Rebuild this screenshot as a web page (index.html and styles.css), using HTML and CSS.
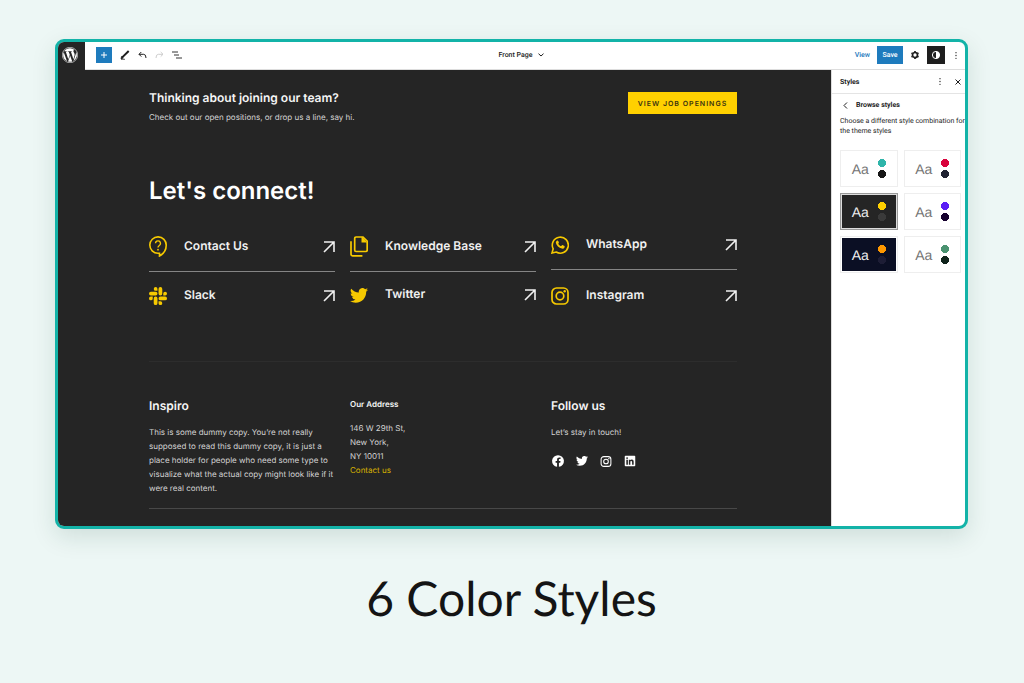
FILE: index.html
```html
<!DOCTYPE html>
<html lang="en">

<head>
  <meta charset="UTF-8">
  <meta name="viewport" content="width=device-width, initial-scale=1.0">
  <title>6 Color Styles</title>
  <link rel="stylesheet" href="styles.css">
</head>

<body>
  <!-- shared icons -->
  <svg class="sprite" aria-hidden="true">
    <symbol id="arrow" viewBox="0 0 12 12">
      <path d="M1 1h10v10M11 1L1 11" fill="none" stroke="currentColor" stroke-width="1.600" />
    </symbol>
    <symbol id="twitter" viewBox="0 0 24 20">
      <path fill="currentColor" d="M24 2.4a9.800 9.800 0 0 1-2.830.770A4.900 4.900 0 0 0 23.340.450a9.900 9.900 0 0 1-3.130 1.190A4.920 4.920 0 0 0 11.820 6.130 14 14 0 0 1 1.670.980a4.930 4.930 0 0 0 1.520 6.570 4.900 4.900 0 0 1-2.230-.610v.060a4.930 4.930 0 0 0 3.950 4.830 5 5 0 0 1-2.220.080 4.930 4.930 0 0 0 4.600 3.420A9.900 9.900 0 0 1 0 17.370a13.940 13.940 0 0 0 7.550 2.210c9.140 0 14.310-7.720 13.980-14.640A10 10 0 0 0 24 2.400z" />
    </symbol>
    <symbol id="instagram" viewBox="0 0 18 18">
      <g fill="none" stroke="currentColor" stroke-width="1.700">
        <rect x="1" y="1" width="16" height="16" rx="4.500" />
        <circle cx="9" cy="9" r="3.800" />
      </g>
      <circle cx="13.700" cy="4.300" r="1.200" fill="currentColor" />
    </symbol>
    <symbol id="dots" viewBox="0 0 10 10">
      <g fill="currentColor">
        <circle cx="5" cy="1.500" r=".800" />
        <circle cx="5" cy="5" r=".800" />
        <circle cx="5" cy="8.500" r=".800" />
      </g>
    </symbol>
  </svg>

  <main class="editor">
    <header class="topbar">
      <a class="wp-logo" href="#" aria-label="WordPress">
        <svg width="16" height="16" viewBox="0 0 122.500 122.500" fill="#fff">
          <path d="M8.700 61.260c0 20.800 12.100 38.780 29.620 47.300L13.260 39.930a52.350 52.350 0 0 0-4.560 21.330zM96.740 58.610c0-6.500-2.330-11-4.340-14.500-2.660-4.330-5.160-8-5.160-12.330 0-4.830 3.660-9.330 8.830-9.330l.680.050A52.350 52.350 0 0 0 61.260 8.710a52.520 52.520 0 0 0-43.890 23.700l3.370.060c5.490 0 13.990-.670 13.990-.670 2.830-.160 3.160 3.990.340 4.330 0 0-2.850.330-6.010.500l19.120 56.880 11.490-34.460-8.180-22.420c-2.830-.170-5.510-.500-5.510-.500-2.830-.160-2.500-4.490.330-4.330 0 0 8.670.670 13.830.670 5.490 0 13.990-.670 13.990-.670 2.830-.160 3.170 3.990.340 4.330 0 0-2.860.330-6.010.500l18.970 56.440 5.240-17.500c2.270-7.260 4-12.480 4-16.960zM62.180 65.860l-15.750 45.770a52.500 52.500 0 0 0 32.270-.840 4.800 4.800 0 0 1-.370-.720zM107.320 36.080c.220 1.670.350 3.460.350 5.390 0 5.320-.990 11.300-3.990 18.770L87.650 106.600a52.540 52.540 0 0 0 19.670-70.520z" />
          <circle cx="61.260" cy="61.260" r="59" fill="none" stroke="#fff" stroke-width="4.500" />
        </svg>
      </a>
      <div class="tools">
        <button class="add" aria-label="Add block">
          <svg width="8" height="8" viewBox="0 0 8 8"><path d="M4 1v6M1 4h6" stroke="#fff" /></svg>
        </button>
        <button aria-label="Edit">
          <svg width="10" height="10" viewBox="0 0 10 10"><path d="M2.200 7.400L8.700 1" stroke="#1e1e1e" stroke-width="2" /><path d="M1 9l.500-2.500L3.300 8zM1 9.300h4" stroke="#1e1e1e" stroke-width=".700" /></svg>
        </button>
        <button aria-label="Undo">
          <svg width="9" height="8" viewBox="0 0 9 8"><path d="M3.300 1L1 3.300l2.300 2.300M1 3.300h4.700Q8 3.300 8 7" fill="none" stroke="#1e1e1e" /></svg>
        </button>
        <button aria-label="Redo" disabled>
          <svg width="9" height="8" viewBox="0 0 9 8"><path d="M5.700 1L8 3.300 5.700 5.600M8 3.300H3.300Q1 3.300 1 7" fill="none" stroke="#ccc" /></svg>
        </button>
        <button aria-label="List view">
          <svg width="10" height="8" viewBox="0 0 10 8"><path d="M0 1h6M2 4h5M4 7h6" stroke="#333" /></svg>
        </button>
      </div>
      <button class="page-name">Front Page
        <svg width="6" height="4" viewBox="0 0 6 4"><path d="M.500.700L3 3 5.500.700" fill="none" stroke="#1e1e1e" /></svg>
      </button>
      <div class="actions">
        <a href="#">View</a>
        <button class="save">Save</button>
        <button aria-label="Settings">
          <svg width="10" height="10" viewBox="0 0 10 10"><circle cx="5" cy="5" r="2.500" fill="none" stroke="#1e1e1e" stroke-width="1.700" /><path d="M5 1v1.200M5 7.800V9M1.500 3l1 .600M7.500 6.400l1 .600M1.500 7l1-.600M7.500 3.600l1-.600" stroke="#1e1e1e" stroke-width="1.700" /></svg>
        </button>
        <button class="contrast" aria-label="Styles">
          <svg width="10" height="10" viewBox="0 0 10 10"><circle cx="5" cy="5" r="3.600" fill="none" stroke="#fff" /><path d="M5 1.400a3.600 3.600 0 0 1 0 7.200z" fill="#fff" /></svg>
        </button>
        <button aria-label="Options"><svg width="8" height="9"><use href="#dots" /></svg></button>
      </div>
    </header>

    <div class="workspace">
      <div class="canvas">
        <section class="join">
          <div>
            <h2>Thinking about joining our team?</h2>
            <p>Check out our open positions, or drop us a line, say hi.</p>
          </div>
          <button class="openings">VIEW JOB OPENINGS</button>
        </section>

        <section class="connect">
          <h1>Let's connect!</h1>
          <div class="columns">
            <div class="links">
              <a href="#">
                <svg class="icon" width="18" height="21" viewBox="0 0 18 21"><path d="M10.500 17.300V20c4.500-2.300 6.700-6 6.700-10.700A8.200 8.200 0 1 0 9 17.300z" fill="none" stroke="currentColor" stroke-width="1.600" /><path d="M6.500 7.300a2.500 2.500 0 1 1 3.800 2.200C9.400 10.100 9 10.500 9 11.600" fill="none" stroke="currentColor" stroke-width="1.400" /><circle cx="9" cy="13.700" r=".900" fill="currentColor" /></svg>
                <span>Contact Us</span><svg class="arrow"><use href="#arrow" /></svg>
              </a>
              <a href="#">
                <svg class="icon" width="18" height="18" viewBox="0 0 24 24" fill="currentColor"><path d="M5 15.200a2.500 2.500 0 1 1-2.500-2.500H5zm1.300 0a2.500 2.500 0 0 1 5 0v6.300a2.500 2.500 0 0 1-5 0zM8.800 5a2.500 2.500 0 1 1 2.500-2.500V5zm0 1.300a2.500 2.500 0 0 1 0 5H2.500a2.500 2.500 0 0 1 0-5zM19 8.800a2.500 2.500 0 1 1 2.500 2.500H19zm-1.300 0a2.500 2.500 0 0 1-5 0V2.500a2.500 2.500 0 0 1 5 0zM15.200 19a2.500 2.500 0 1 1-2.500 2.500V19zm0-1.300a2.500 2.500 0 0 1 0-5h6.300a2.500 2.500 0 0 1 0 5z" /></svg>
                <span>Slack</span><svg class="arrow"><use href="#arrow" /></svg>
              </a>
            </div>
            <div class="links">
              <a href="#">
                <svg class="icon" width="18" height="21" viewBox="0 0 18 21"><path d="M6 1h7l4.200 4.200V14q0 1.500-1.500 1.500H6Q4.700 15.500 4.700 14V2.300Q4.700 1 6 1zM1 5.300v12.900q0 1.600 1.600 1.600h9.800" fill="none" stroke="currentColor" stroke-width="1.700" /><path d="M11.500 1v5.500h5.700L12.500 1z" fill="currentColor" /></svg>
                <span>Knowledge Base</span><svg class="arrow"><use href="#arrow" /></svg>
              </a>
              <a href="#">
                <svg class="icon" width="18" height="15"><use href="#twitter" /></svg>
                <span>Twitter</span><svg class="arrow"><use href="#arrow" /></svg>
              </a>
            </div>
            <div class="links social-links">
              <a href="#">
                <svg class="icon" width="18" height="18" viewBox="0 0 18 18"><path d="M1 17l1.200-4.200A8 8 0 1 1 5.200 16z" fill="none" stroke="currentColor" stroke-width="1.600" /><path d="M5.800 4.800c.600-.600 1.200-.500 1.500.200l.600 1.400c.100.400-.200.800-.700 1.300.600 1.200 1.500 2 2.800 2.600l1-1.100c.300-.200.600-.100.900 0l1.600.900c.300.200.200.800 0 1.300-.500 1-1.600 1.400-2.600 1.200-3-.600-5.500-3-6-5.500-.100-1 .300-1.800.900-2.300z" fill="currentColor" /></svg>
                <span>WhatsApp</span><svg class="arrow"><use href="#arrow" /></svg>
              </a>
              <a href="#">
                <svg class="icon" width="18" height="18"><use href="#instagram" /></svg>
                <span>Instagram</span><svg class="arrow"><use href="#arrow" /></svg>
              </a>
            </div>
          </div>
        </section>

        <footer class="columns site-footer">
          <div>
            <h3>Inspiro</h3>
            <p>This is some dummy copy. You’re not really supposed to read this dummy copy, it is just a place holder for people who need some type to visualize what the actual copy might look like if it were real content.</p>
          </div>
          <div>
            <h4>Our Address</h4>
            <p>146 W 29th St,<br>New York,<br>NY 10011<br><a href="#">Contact us</a></p>
          </div>
          <div>
            <h3>Follow us</h3>
            <p>Let’s stay in touch!</p>
            <div class="social">
              <a href="#" aria-label="Facebook"><svg width="14" height="14" viewBox="0 0 24 24"><path fill="currentColor" d="M12 2a10 10 0 0 0-1.600 19.900v-7H7.900V12h2.500V9.800c0-2.500 1.500-3.900 3.800-3.900 1.100 0 2.200.200 2.200.200v2.500h-1.300c-1.200 0-1.600.800-1.600 1.600V12h2.800l-.400 2.900h-2.300v7A10 10 0 0 0 12 2z" /></svg></a>
              <a href="#" aria-label="Twitter"><svg width="14" height="10"><use href="#twitter" /></svg></a>
              <a href="#" aria-label="Instagram"><svg width="14" height="11"><use href="#instagram" /></svg></a>
              <a href="#" aria-label="LinkedIn"><svg width="14" height="14" viewBox="0 0 24 24"><path fill="currentColor" d="M19.700 3H4.300A1.300 1.300 0 0 0 3 4.300v15.400A1.300 1.300 0 0 0 4.300 21h15.400a1.300 1.300 0 0 0 1.300-1.300V4.300A1.300 1.300 0 0 0 19.700 3zM8.300 18.300H5.700V9.700h2.700v8.600zM7 8.600a1.500 1.500 0 1 1 0-3.100 1.500 1.500 0 0 1 0 3.100zm11.300 9.700h-2.700v-4.200c0-1 0-2.300-1.400-2.300s-1.600 1.100-1.600 2.200v4.300H10V9.700h2.600v1.200c.400-.700 1.200-1.400 2.500-1.400 2.700 0 3.200 1.800 3.200 4.100z" /></svg></a>
            </div>
          </div>
        </footer>
      </div>

      <aside class="sidebar">
        <div class="sidebar-head">
          <strong>Styles</strong>
          <button aria-label="More"><svg width="8" height="9"><use href="#dots" /></svg></button>
          <button aria-label="Close"><svg width="6" height="6" viewBox="0 0 6 6"><path d="M.500.500l5 5M5.500.500l-5 5" stroke="#1e1e1e" /></svg></button>
        </div>
        <div class="browse">
          <button aria-label="Back"><svg width="5" height="7" viewBox="0 0 5 7"><path d="M4 .500L1 3.500l3 3" fill="none" stroke="#1e1e1e" /></svg></button>
          <strong>Browse styles</strong>
        </div>
        <p>Choose a different style combination for the theme styles</p>
        <div class="swatches">
          <button class="swatch teal">Aa<i></i></button>
          <button class="swatch red">Aa<i></i></button>
          <button class="swatch yellow">Aa<i></i></button>
          <button class="swatch purple">Aa<i></i></button>
          <button class="swatch orange">Aa<i></i></button>
          <button class="swatch green">Aa<i></i></button>
        </div>
      </aside>
    </div>
  </main>

  <p class="caption">6 Color Styles</p>
</body>

</html>
```
FILE: styles.css
```css
* {
  box-sizing: border-box;
}

body {
  margin: 0;
  padding: 39px 56px 0 55px;
  background-color: #edf7f5;
  color: #1e1e1e;
  font-family: Inter, sans-serif;
  font-size: 8px;
  text-rendering: geometricPrecision;
}

h1, h2, h3, h4, p {
  margin: 0;
}

a {
  color: inherit;
  text-decoration: none;
}

button {
  display: flex;
  align-items: center;
  justify-content: center;
  padding: 0;
  border: none;
  background: none;
  color: inherit;
  font: inherit;
  text-rendering: inherit;
  cursor: pointer;
}

svg {
  display: block;
  flex-shrink: 0;
}

.sprite {
  display: none;
}

.editor {
  border: 3px solid #13b3a8;
  border-radius: 9px;
  overflow: hidden;
  background-color: #fff;
  box-shadow: 0 8px 24px rgba(0, 60, 50, 0.13);
}

/* top bar */
.topbar {
  display: grid;
  grid-template-columns: 27px 1fr auto 1fr;
  align-items: center;
  height: 28px;
  border-bottom: 1px solid #ddd;
  font-family: Roboto, sans-serif;
  font-size: 7px;
  font-weight: 500;
}

.wp-logo {
  display: flex;
  align-items: center;
  justify-content: center;
  height: 28px;
  padding: 0 3px 2px 0;
  background-color: #252525;
}

.tools,
.page-name,
.actions {
  padding-bottom: 2px;
}

.tools {
  display: flex;
  align-items: center;
  gap: 8px;
  padding-left: 11px;
}

.tools .add {
  width: 16px;
  height: 16px;
  background-color: #1e7bbd;
}

.page-name {
  gap: 5px;
  padding-right: 8px;
}

.actions {
  display: flex;
  align-items: center;
  justify-content: flex-end;
  gap: 7px;
  padding-right: 5px;
}

.actions a {
  color: #1e7bbd;
}

.actions .save {
  width: 26px;
  height: 18px;
  background-color: #1e7bbd;
  color: #fff;
}

.actions .contrast {
  width: 18px;
  height: 18px;
  background-color: #1e1e1e;
}

.workspace {
  display: flex;
}

/* page preview */
.canvas {
  flex: 1;
  padding: 21px 94px 17px 91px;
  background-color: #252525;
  color: #d4d4d4;
}

.join {
  display: flex;
  justify-content: space-between;
  align-items: flex-start;
}

.join h2 {
  margin-bottom: 6px;
  color: #f5f5f5;
  font-size: 12px;
  font-weight: 600;
  line-height: 14px;
}

.join p {
  line-height: 12px;
}

.openings {
  width: 109px;
  height: 22px;
  margin-top: 1px;
  background-color: #ffd000;
  color: #3b3311;
  font-size: 7px;
  font-weight: 600;
  letter-spacing: 1px;
}

.connect {
  padding: 53px 0 56px;
  border-bottom: 1px solid #2d2d2d;
}

.connect h1 {
  margin-bottom: 30px;
  color: #fff;
  font-size: 24px;
  font-weight: 600;
  line-height: 30px;
}

.columns {
  display: grid;
  grid-template-columns: repeat(3, 1fr);
  gap: 15px;
}

.links a {
  display: flex;
  align-items: center;
  color: #f0f0f0;
  font-size: 12px;
  font-weight: 600;
}

.links a:first-child {
  padding-bottom: 14px;
  border-bottom: 1px solid #858585;
}

.links a:last-child {
  padding-top: 15px;
}

.social-links a:first-child {
  padding-bottom: 15px;
}

.social-links a:last-child {
  padding-top: 17px;
}

.links .icon {
  color: #f6c900;
}

.links span {
  flex: 1;
  padding: 0 0 2px 17px;
  line-height: 14px;
}

.links .arrow {
  width: 12px;
  height: 12px;
}

.site-footer {
  padding: 36px 0 13px;
  border-bottom: 1px solid #484848;
}

.site-footer h3 {
  margin-bottom: 11px;
  color: #f5f5f5;
  font-size: 12px;
  font-weight: 600;
  line-height: 16px;
}

.site-footer h4 {
  margin-bottom: 10px;
  color: #f5f5f5;
  font-size: 8px;
  font-weight: 600;
  line-height: 13px;
}

.site-footer p {
  line-height: 14px;
}

.site-footer p a {
  color: #d9b300;
}

.social {
  display: flex;
  align-items: center;
  gap: 10px;
  padding-top: 15px;
  color: #fff;
}

/* styles panel */
.sidebar {
  width: 134px;
  border-left: 1px solid #ddd;
  font-family: Roboto, sans-serif;
  font-size: 7px;
}

.sidebar-head {
  display: flex;
  align-items: center;
  gap: 11px;
  height: 24px;
  padding: 0 4px 0 8px;
  border-bottom: 1px solid #e4e4e4;
}

.sidebar strong {
  font-weight: 700;
}

.sidebar-head strong {
  flex: 1;
}

.browse {
  display: flex;
  align-items: center;
  gap: 8px;
  height: 22px;
  padding-left: 11px;
}

.sidebar p {
  padding: 0 0 0 8px;
  line-height: 10px;
}

.swatches {
  display: grid;
  grid-template-columns: 1fr 1fr;
  gap: 6px;
  padding: 14px 4px 0 8px;
}

.swatch {
  gap: 9px;
  height: 37px;
  border: 1px solid #eee;
  color: #757575;
  font-family: "Liberation Sans", sans-serif;
  font-size: 14px;
}

.swatch i {
  width: 8px;
  height: 19px;
  background: radial-gradient(circle at 4px 4px, var(--top) 4px, transparent 4px),
    radial-gradient(circle at 4px 15px, var(--bottom) 4px, transparent 4px);
}

.teal { --top: #2fb5aa; --bottom: #171717; }
.red { --top: #d9043d; --bottom: #202333; }
.yellow { --top: #ffd000; --bottom: #3a3a3a; }
.purple { --top: #5b1df5; --bottom: #15002e; }
.orange { --top: #ff9800; --bottom: #1d1d35; }
.green { --top: #4a9270; --bottom: #10241c; }

.swatch.yellow {
  border-color: #999;
  background-color: #252525;
  box-shadow: inset 0 0 0 1px #ddd;
  color: #eee;
}

.swatch.orange {
  background-color: #0b0f24;
  box-shadow: inset 0 0 0 1px #fff;
  color: #eee;
}

.caption {
  padding-top: 40px;
  color: #141414;
  font-family: Lato, sans-serif;
  font-size: 48px;
  line-height: 60px;
  text-align: center;
}
```
